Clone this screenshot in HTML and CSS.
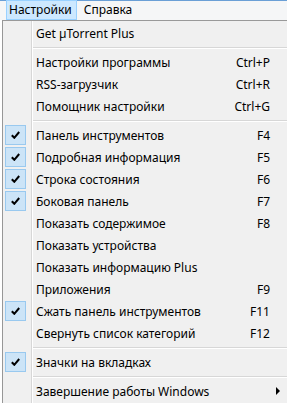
FILE: index.html
```html
<!DOCTYPE html>
<html lang="ru">
<head>
<meta charset="utf-8">
<link rel="stylesheet" href="styles.css">
</head>
<body>
<div class="menubar">
  <span class="mb-item active">Настройки</span>
  <span class="mb-item">Справка</span>
</div>
<div class="popup">
  <div class="item"><span class="gut"></span><span class="label">Get µTorrent Plus</span></div>
  <div class="sep"></div>
  <div class="item"><span class="gut"></span><span class="label">Настройки программы</span><span class="key">Ctrl+P</span></div>
  <div class="item"><span class="gut"></span><span class="label">RSS-загрузчик</span><span class="key">Ctrl+R</span></div>
  <div class="item"><span class="gut"></span><span class="label">Помощник настройки</span><span class="key">Ctrl+G</span></div>
  <div class="sep"></div>
  <div class="item"><span class="gut"><span class="check"><svg viewBox="0 0 9 8" width="9" height="8"><path d="M0.8 4.2 L3.3 6.8 L8.2 1" fill="none" stroke="#000" stroke-width="2"/></svg></span></span><span class="label">Панель инструментов</span><span class="key">F4</span></div>
  <div class="item"><span class="gut"><span class="check"><svg viewBox="0 0 9 8" width="9" height="8"><path d="M0.8 4.2 L3.3 6.8 L8.2 1" fill="none" stroke="#000" stroke-width="2"/></svg></span></span><span class="label">Подробная информация</span><span class="key">F5</span></div>
  <div class="item"><span class="gut"><span class="check"><svg viewBox="0 0 9 8" width="9" height="8"><path d="M0.8 4.2 L3.3 6.8 L8.2 1" fill="none" stroke="#000" stroke-width="2"/></svg></span></span><span class="label">Строка состояния</span><span class="key">F6</span></div>
  <div class="item"><span class="gut"><span class="check"><svg viewBox="0 0 9 8" width="9" height="8"><path d="M0.8 4.2 L3.3 6.8 L8.2 1" fill="none" stroke="#000" stroke-width="2"/></svg></span></span><span class="label">Боковая панель</span><span class="key">F7</span></div>
  <div class="item"><span class="gut"></span><span class="label">Показать содержимое</span><span class="key">F8</span></div>
  <div class="item"><span class="gut"></span><span class="label">Показать устройства</span></div>
  <div class="item"><span class="gut"></span><span class="label">Показать информацию Plus</span></div>
  <div class="item"><span class="gut"></span><span class="label">Приложения</span><span class="key">F9</span></div>
  <div class="item"><span class="gut"><span class="check"><svg viewBox="0 0 9 8" width="9" height="8"><path d="M0.8 4.2 L3.3 6.8 L8.2 1" fill="none" stroke="#000" stroke-width="2"/></svg></span></span><span class="label">Сжать панель инструментов</span><span class="key">F11</span></div>
  <div class="item"><span class="gut"></span><span class="label">Свернуть список категорий</span><span class="key">F12</span></div>
  <div class="sep"></div>
  <div class="item"><span class="gut"><span class="check"><svg viewBox="0 0 9 8" width="9" height="8"><path d="M0.8 4.2 L3.3 6.8 L8.2 1" fill="none" stroke="#000" stroke-width="2"/></svg></span></span><span class="label">Значки на вкладках</span></div>
  <div class="sep"></div>
  <div class="item"><span class="gut"></span><span class="label">Завершение работы Windows</span><span class="arrow"></span></div>
</div>
</body>
</html>
```

FILE: styles.css
```css
* { box-sizing: border-box; }
html, body { margin: 0; padding: 0; }
body {
  width: 287px;
  height: 403px;
  overflow: hidden;
  background: #ffffff;
  font-family: "Noto Sans", "Open Sans", sans-serif;
  font-size: 12px;
  color: #000;
}
.menubar {
  height: 20px;
  border-top: 1px solid #6a9fd6;
  background: #f5f6f7;
  display: flex;
  gap: 4px;
  padding-left: 6px;
}
.mb-item {
  display: flex;
  align-items: center;
  height: 20px;
  margin-top: -1px;
  padding: 0 4px 0 2px;
  border: 1px solid transparent;
  line-height: 1;
}
.mb-item.active {
  background: #cce8ff;
  border-color: #99d1ff;
}
.popup {
  margin-left: 2px;
  border-top: 1px solid #999999;
  border-left: 1px solid #979797;
  background-color: #f0f0f0;
  background-image: linear-gradient(to right, transparent 28px, #d7d7d7 28px, #d7d7d7 29px, #ffffff 29px, #ffffff 30px, transparent 30px);
  padding-top: 1px;
  height: 383px;
}
.item {
  height: 22px;
  display: flex;
  align-items: center;
  padding-right: 17px;
}
.gut {
  width: 28px;
  height: 22px;
  flex: none;
  display: flex;
  align-items: center;
}
.check {
  margin-left: 2px;
  width: 21px;
  height: 20px;
  background: #cce4f7;
  border: 1px solid #99c9ef;
  display: flex;
  align-items: center;
  justify-content: center;
}
.check svg { display: block; }
.label {
  flex: 1;
  margin-left: 5px;
  white-space: nowrap;
}
.key { white-space: nowrap; }
.arrow {
  width: 0;
  height: 0;
  margin-right: -10px;
  border-top: 4px solid transparent;
  border-bottom: 4px solid transparent;
  border-left: 4px solid #000;
}
.sep {
  height: 7px;
  display: flex;
  align-items: center;
  padding-left: 30px;
}
.sep::after {
  content: "";
  flex: 1;
  border-top: 1px solid #d7d7d7;
  border-bottom: 1px solid #ffffff;
}
```
